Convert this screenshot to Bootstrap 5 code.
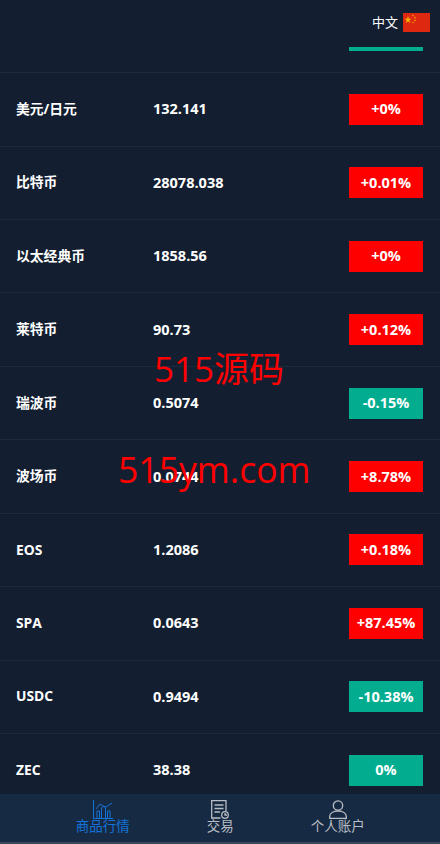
<!DOCTYPE html>
<html lang="zh-CN">
<head>
    <meta charset="UTF-8">
    <meta name="viewport" content="width=device-width, initial-scale=1.0">
    <title>商品行情</title>
    <link href="https://cdn.jsdelivr.net/npm/bootstrap@5.3.0/dist/css/bootstrap.min.css" rel="stylesheet">
    <style>
        html, body { height: 100%; }
        body { background: #131f31; color: #fff; font-family: "Open Sans", "Noto Sans CJK SC", sans-serif; overflow: hidden; }
        .app-shell { height: 844px; position: relative; overflow: hidden; }
        .top-bar { height: 72px; }
        .lang-tab { width: 74px; height: 51px; margin-left: auto; margin-right: 17px; border-bottom: 4px solid #02ad8f; }
        .lang-row { height: 45px; font-size: 13px; width: 100px; margin-left: -19px; margin-right: -6px; gap: 5px; }
        .flag-cn { width: 27px; height: 19px; display: block; }
        .quote-list { height: 722px; overflow: hidden; }
        .quote-row { height: 73.5px; border-top: 1px solid #1b2a3d; padding: 0 17px 0 16px; }
        .quote-row:nth-child(even) { height: 73.4px; }
        .quote-name { width: 137px; font-size: 13.8px; font-weight: 700; }
        .quote-price { font-size: 14.5px; font-weight: 700; }
        .quote-chg { width: 74px; height: 31px; margin-left: auto; font-size: 14.5px; font-weight: 700; }
        .chg-up { background: #f00; }
        .chg-down { background: #02ad8f; }
        .tab-bar { height: 50px; background: #172a43; border-bottom: 2px solid #3a4556; padding-left: 44px; }
        .tab-item { width: 117.500px; color: #b9bdc4; font-size: 13.500px; line-height: 15px; padding-top: 6px; }
        .tab-item svg { display: block; margin: 0 auto; }
        .tab-on { color: #1473d8; }
        .mark-text { position: absolute; color: #f00; white-space: nowrap; line-height: 1; pointer-events: none; }
        .mark-one { left: 154px; top: 351px; font-size: 35px; }
        .mark-two { left: 118px; top: 452px; font-size: 35.600px; }
    </style>
</head>
<body>
    <div class="app-shell">
        <!-- Top bar -->
        <div class="top-bar">
            <div class="lang-tab">
                <div class="lang-row d-flex align-items-center justify-content-end">
                    <span>中文</span>
                    <svg class="flag-cn" viewBox="0 0 27 19">
                        <rect width="27" height="19" fill="#de2910"/>
                        <polygon points="5,3 5.900,5.700 8.600,5.700 6.400,7.300 7.300,10 5,8.300 2.700,10 3.600,7.300 1.400,5.700 4.100,5.700" fill="#f7b500"/>
                        <circle cx="10" cy="2.500" r="0.800" fill="#f0a000"/>
                        <circle cx="12" cy="4.600" r="0.800" fill="#f0a000"/>
                        <circle cx="12" cy="7.400" r="0.800" fill="#f0a000"/>
                        <circle cx="10" cy="9.500" r="0.800" fill="#f0a000"/>
                    </svg>
                </div>
            </div>
        </div>

        <!-- Quotes -->
        <div class="quote-list" id="quoteList"></div>

        <!-- Bottom tabs -->
        <nav class="tab-bar d-flex">
            <a class="tab-item tab-on text-center text-decoration-none" href="#">
                <svg width="20" height="19" viewBox="0 0 20 19" fill="none" stroke="currentColor" stroke-width="1">
                    <path d="M.5 0V18.500H20"/>
                    <path d="M4 18V11H6.500V18M8.500 18V8L10.500 6 12.500 8V18M14.500 18V11H17V18"/>
                    <path d="M3 9 7 4 10 6 13 7 19 3"/>
                </svg>
                商品行情
            </a>
            <a class="tab-item text-center text-decoration-none" href="#">
                <svg width="18" height="19" viewBox="0 0 18 19" fill="none" stroke="currentColor" stroke-width="1.300">
                    <path d="M9.500 18H.700V.700H15V11"/>
                    <path d="M3.500 5H12.500M3.500 8.500H12.500M3.500 12H9"/>
                    <circle cx="14" cy="15" r="3.300"/>
                    <path d="M14 13V15H16"/>
                </svg>
                交易
            </a>
            <a class="tab-item text-center text-decoration-none" href="#">
                <svg width="18" height="19" viewBox="0 0 18 19" fill="none" stroke="currentColor" stroke-width="1.300">
                    <circle cx="9" cy="5.500" r="4.700"/>
                    <path d="M.700 18.300V16.500C.700 13 4.500 11 9 11S17.300 13 17.300 16.500V18.300Z"/>
                </svg>
                个人账户
            </a>
        </nav>

        <div class="mark-text mark-one">515源码</div>
        <div class="mark-text mark-two">515ym.com</div>
    </div>

    <script src="https://cdn.jsdelivr.net/npm/bootstrap@5.3.0/dist/js/bootstrap.bundle.min.js"></script>
    <script>
        const quotes = [
            ['美元/日元', '132.141', '+0%', true],
            ['比特币', '28078.038', '+0.01%', true],
            ['以太经典币', '1858.56', '+0%', true],
            ['莱特币', '90.73', '+0.12%', true],
            ['瑞波币', '0.5074', '-0.15%', false],
            ['波场币', '0.0744', '+8.78%', true],
            ['EOS', '1.2086', '+0.18%', true],
            ['SPA', '0.0643', '+87.45%', true],
            ['USDC', '0.9494', '-10.38%', false],
            ['ZEC', '38.38', '0%', false]
        ];

        const list = document.getElementById('quoteList');
        quotes.forEach(q => {
            const row = document.createElement('div');
            row.className = 'quote-row d-flex align-items-center';
            row.innerHTML = `
                <div class="quote-name">${q[0]}</div>
                <div class="quote-price">${q[1]}</div>
                <div class="quote-chg d-flex align-items-center justify-content-center ${q[3] ? 'chg-up' : 'chg-down'}">${q[2]}</div>
            `;
            list.appendChild(row);
        });
    </script>
</body>
</html>
